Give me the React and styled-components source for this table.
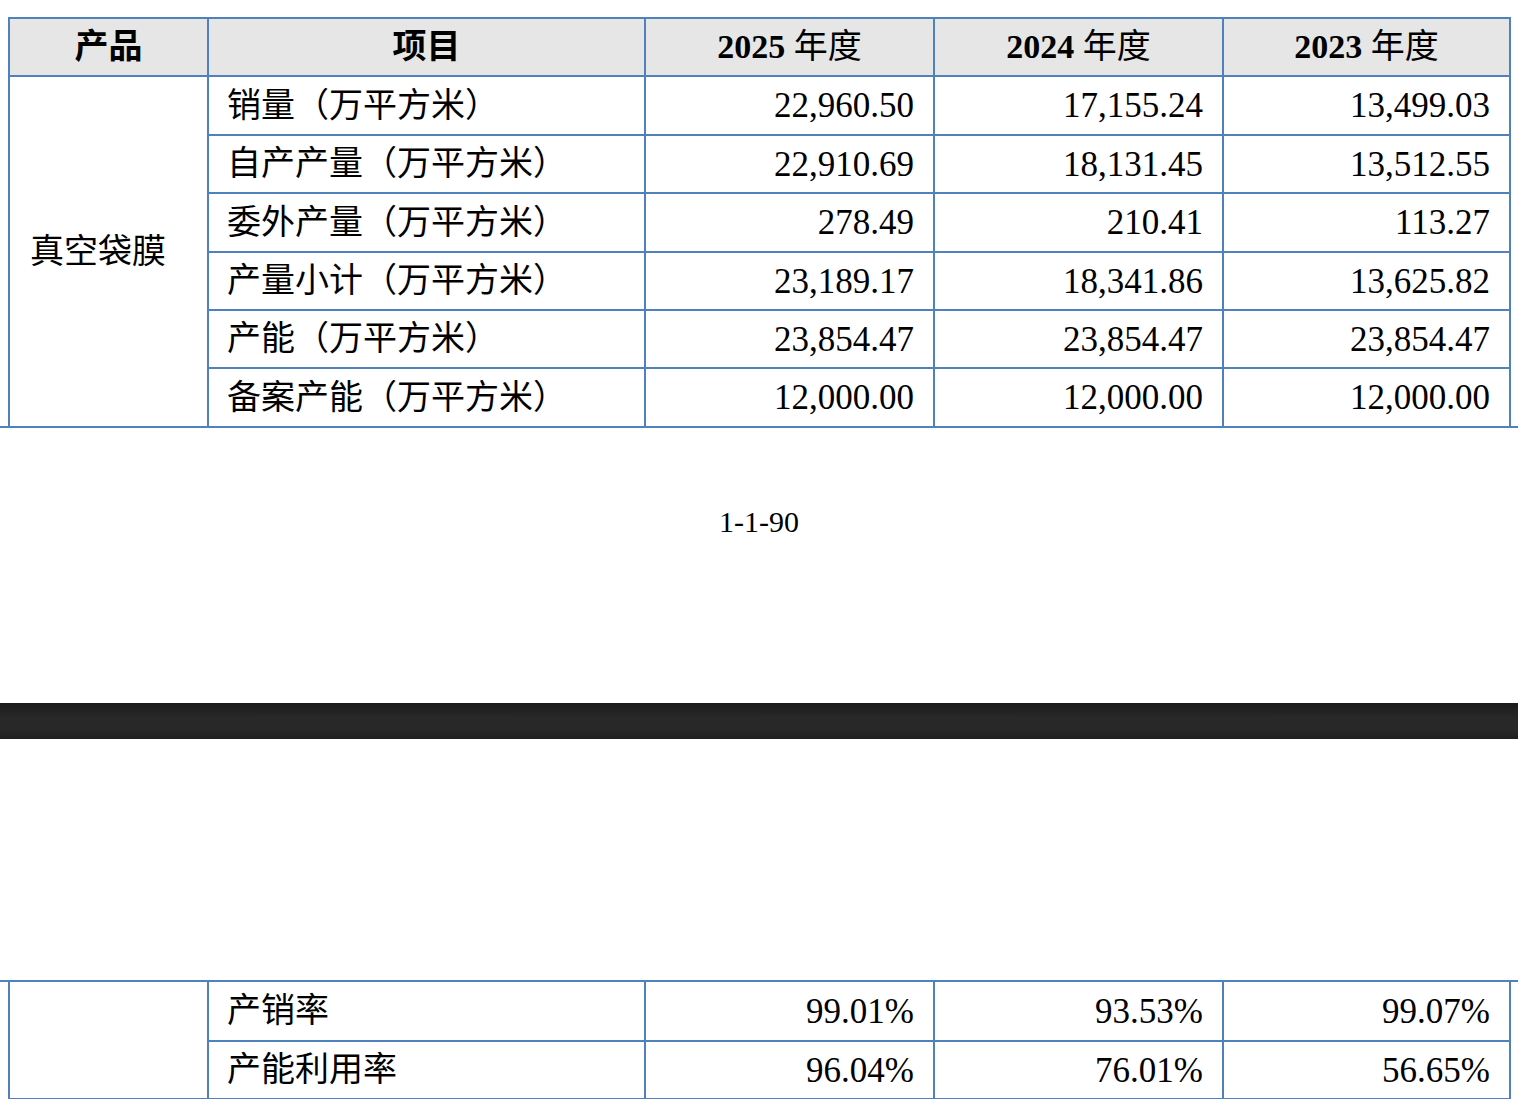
import styled, { createGlobalStyle } from 'styled-components';

const GlobalStyle = createGlobalStyle`
  html, body {
    margin: 0;
    padding: 0;
    background: #fff;
  }
  body {
    font-family: "Liberation Serif", "Noto Sans CJK SC", serif;
    color: #000;
  }
`;

const LINE = '#4f81bd';

const Page = styled.div`
  width: 1518px;
  padding-top: 17px;
  overflow: hidden;
`;

const TableBlock = styled.div`
  width: 100%;
  ${({ $edge }) => `border-${$edge}: 2px solid ${LINE};`}
`;

const Table = styled.table`
  margin-left: 8px;
  width: 1503px;
  table-layout: fixed;
  border-collapse: collapse;
  font-size: 34px;
  line-height: 1;

  td, th {
    border: 2px solid ${LINE};
    padding: 0;
    vertical-align: middle;
  }
  tr:first-child td, tr:first-child th {
    border-top: ${({ $open }) => ($open === 'top' ? '0' : `2px solid ${LINE}`)};
  }
  tr:last-child td, td[rowspan] {
    border-bottom: ${({ $open }) => ($open === 'bottom' ? '0' : `2px solid ${LINE}`)};
  }
`;

const Row = styled.tr`
  height: ${({ $h }) => $h}px;
`;

const HeadCell = styled.th`
  background: #e6e6e6;
  font-weight: 700;
  text-align: center;

  span {
    font-weight: 400;
  }
`;

const ProductCell = styled.td`
  padding-left: 20px !important;
  text-align: left;
`;

const LabelCell = styled.td`
  padding-left: 18px !important;
  text-align: left;
  white-space: nowrap;
`;

const NumCell = styled.td`
  padding-right: 19px !important;
  text-align: right;
  font-size: 35px;
`;

const PageNumber = styled.div`
  margin-top: 78px;
  text-align: center;
  font-size: 30px;
  line-height: 32px;
`;

const Divider = styled.div`
  margin-top: 165px;
  height: 36px;
  background: linear-gradient(#1b1b1b, #282828 40%, #282828 75%, #1f1f1f);
`;

const Spacer = styled.div`
  height: 241px;
`;

const cols = [199, 437, 289, 289, 287];

const output = [
  ['销量（万平方米）', '22,960.50', '17,155.24', '13,499.03'],
  ['自产产量（万平方米）', '22,910.69', '18,131.45', '13,512.55'],
  ['委外产量（万平方米）', '278.49', '210.41', '113.27'],
  ['产量小计（万平方米）', '23,189.17', '18,341.86', '13,625.82'],
  ['产能（万平方米）', '23,854.47', '23,854.47', '23,854.47'],
  ['备案产能（万平方米）', '12,000.00', '12,000.00', '12,000.00'],
];
const outputHeights = [59, 58, 59, 58, 58, 58];

const rates = [
  ['产销率', '99.01%', '93.53%', '99.07%'],
  ['产能利用率', '96.04%', '76.01%', '56.65%'],
];
const rateHeights = [59, 58];

function Cols() {
  return (
    <colgroup>
      {cols.map((w, i) => (
        <col key={i} style={{ width: w }} />
      ))}
    </colgroup>
  );
}

export default function App() {
  return (
    <Page>
      <GlobalStyle />
      <TableBlock $edge="bottom">
        <Table $open="bottom">
          <Cols />
          <tbody>
            <Row $h={58}>
              <HeadCell>产品</HeadCell>
              <HeadCell>项目</HeadCell>
              <HeadCell>2025 <span>年度</span></HeadCell>
              <HeadCell>2024 <span>年度</span></HeadCell>
              <HeadCell>2023 <span>年度</span></HeadCell>
            </Row>
            {output.map((r, i) => (
              <Row key={r[0]} $h={outputHeights[i]}>
                {i === 0 && <ProductCell rowSpan={output.length}>真空袋膜</ProductCell>}
                <LabelCell>{r[0]}</LabelCell>
                <NumCell>{r[1]}</NumCell>
                <NumCell>{r[2]}</NumCell>
                <NumCell>{r[3]}</NumCell>
              </Row>
            ))}
          </tbody>
        </Table>
      </TableBlock>

      <PageNumber>1-1-90</PageNumber>
      <Divider />
      <Spacer />

      <TableBlock $edge="top">
        <Table $open="top">
          <Cols />
          <tbody>
            {rates.map((r, i) => (
              <Row key={r[0]} $h={rateHeights[i]}>
                {i === 0 && <ProductCell rowSpan={rates.length} />}
                <LabelCell>{r[0]}</LabelCell>
                <NumCell>{r[1]}</NumCell>
                <NumCell>{r[2]}</NumCell>
                <NumCell>{r[3]}</NumCell>
              </Row>
            ))}
          </tbody>
        </Table>
      </TableBlock>
    </Page>
  );
}
